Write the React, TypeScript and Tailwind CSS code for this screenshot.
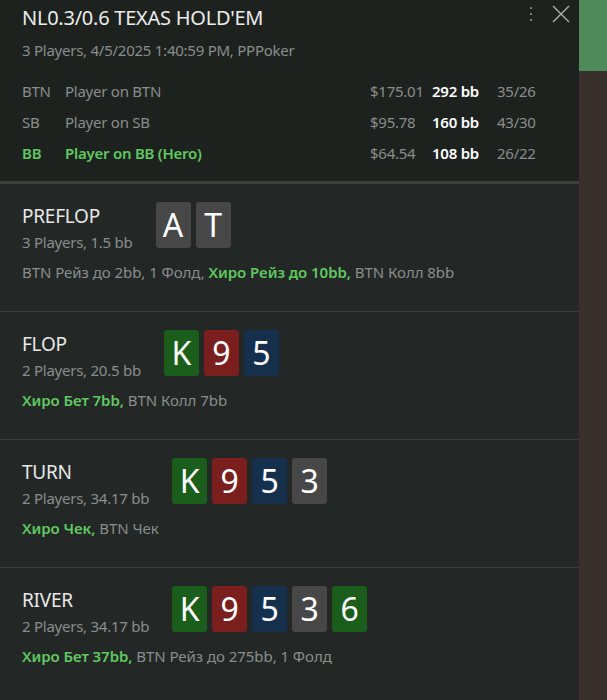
import React from "react";

type Card = { r: string; c: "g" | "r" | "b" | "k" };

const cardBg: Record<string, string> = {
  g: "bg-[#1b5e1b]",
  r: "bg-[#7a1e1e]",
  b: "bg-[#14304d]",
  k: "bg-[#474747]",
};

function CardBox({ card }: { card: Card }) {
  return (
    <div
      className={`${cardBg[card.c]} w-[35px] h-[46px] rounded-[3px] flex items-center justify-center text-[32px] leading-none text-white tracking-normal`}
    >
      {card.r}
    </div>
  );
}

type Seg = { t: string; hero?: boolean };

function Street({
  name,
  sub,
  cards,
  actions,
}: {
  name: string;
  sub: string;
  cards: Card[];
  actions: Seg[];
}) {
  return (
    <div className="border-t border-[#3a3f3d] pl-[22px] pt-[18px] pb-[27px]">
      <div className="flex items-start gap-[23px]">
        <div className="flex flex-col">
          <div className="text-[19px] leading-[28px] text-[#e8e8e8]">{name}</div>
          <div className="text-[15px] leading-[24px] text-[#8a8d8c]">{sub}</div>
        </div>
        <div className="flex gap-[5px]">
          {cards.map((c, i) => (
            <CardBox key={i} card={c} />
          ))}
        </div>
      </div>
      <div className="mt-[6px] text-[15px] leading-[24px] text-[#8a8d8c] whitespace-nowrap tracking-[-0.05px]">
        {actions.map((s, i) => (
          <span key={i} className={s.hero ? "font-semibold text-[#5fc95f]" : ""}>
            {s.t}
          </span>
        ))}
      </div>
    </div>
  );
}

function PlayerRow({
  pos,
  name,
  money,
  bb,
  stats,
  hero,
}: {
  pos: string;
  name: string;
  money: string;
  bb: string;
  stats: string;
  hero?: boolean;
}) {
  return (
    <div className="flex items-center h-[31px] text-[15px]">
      <div className={`w-[43px] ${hero ? "font-semibold text-[#5fc95f]" : "text-[#8a8d8c]"}`}>{pos}</div>
      <div className={`flex-1 ${hero ? "font-semibold text-[#5fc95f]" : "text-[#8a8d8c]"}`}>{name}</div>
      <div className="w-[62px] text-[#8a8d8c]">{money}</div>
      <div className="w-[65px] text-white font-semibold">{bb}</div>
      <div className="w-[82px] text-[#8a8d8c]">{stats}</div>
    </div>
  );
}

export default function App() {
  return (
    <div
      className="flex w-[607px] h-[700px] overflow-hidden tracking-[-0.25px]"
      style={{ fontFamily: '"Noto Sans", "Open Sans", sans-serif' }}
    >
      <div className="w-[579px] h-full bg-[#232827] flex flex-col">
        <div className="bg-[#1d221f] pl-[22px] pt-[4px] pb-[12px] border-b-2 border-[#3a3f3d] relative">
          <div className="text-[20px] leading-[28px] text-[#ececec]">NL0.3/0.6 TEXAS HOLD'EM</div>
          <div className="mt-[6px] text-[15px] leading-[24px] text-[#8a8d8c]">
            3 Players, 4/5/2025 1:40:59 PM, PPPoker
          </div>
          <div className="mt-[14px]">
            <PlayerRow pos="BTN" name="Player on BTN" money="$175.01" bb="292 bb" stats="35/26" />
            <PlayerRow pos="SB" name="Player on SB" money="$95.78" bb="160 bb" stats="43/30" />
            <PlayerRow pos="BB" name="Player on BB (Hero)" money="$64.54" bb="108 bb" stats="26/22" hero />
          </div>
          <div className="absolute top-[5px] right-[9px] flex items-center gap-[20px]">
            <div className="flex flex-col gap-[4px] items-center">
              <div className="w-[2px] h-[2px] bg-[#9a9d9c] rounded-full" />
              <div className="w-[2px] h-[2px] bg-[#9a9d9c] rounded-full" />
              <div className="w-[2px] h-[2px] bg-[#9a9d9c] rounded-full" />
            </div>
            <svg width="18" height="18" viewBox="0 0 18 18">
              <path d="M1 1 L17 17 M17 1 L1 17" stroke="#b0b3b2" strokeWidth="1.3" fill="none" />
            </svg>
          </div>
        </div>
        <Street
          name="PREFLOP"
          sub="3 Players, 1.5 bb"
          cards={[
            { r: "A", c: "k" },
            { r: "T", c: "k" },
          ]}
          actions={[
            { t: "BTN Рейз до 2bb, 1 Фолд, " },
            { t: "Хиро Рейз до 10bb,", hero: true },
            { t: " BTN Колл 8bb" },
          ]}
        />
        <Street
          name="FLOP"
          sub="2 Players, 20.5 bb"
          cards={[
            { r: "K", c: "g" },
            { r: "9", c: "r" },
            { r: "5", c: "b" },
          ]}
          actions={[{ t: "Хиро Бет 7bb,", hero: true }, { t: " BTN Колл 7bb" }]}
        />
        <Street
          name="TURN"
          sub="2 Players, 34.17 bb"
          cards={[
            { r: "K", c: "g" },
            { r: "9", c: "r" },
            { r: "5", c: "b" },
            { r: "3", c: "k" },
          ]}
          actions={[{ t: "Хиро Чек,", hero: true }, { t: " BTN Чек" }]}
        />
        <Street
          name="RIVER"
          sub="2 Players, 34.17 bb"
          cards={[
            { r: "K", c: "g" },
            { r: "9", c: "r" },
            { r: "5", c: "b" },
            { r: "3", c: "k" },
            { r: "6", c: "g" },
          ]}
          actions={[
            { t: "Хиро Бет 37bb,", hero: true },
            { t: " BTN Рейз до 275bb, 1 Фолд" },
          ]}
        />
      </div>
      <div className="flex-1 flex flex-col">
        <div className="h-[71px] bg-[#4f8a5a]" />
        <div className="flex-1 bg-[#3a302b]" />
      </div>
    </div>
  );
}
